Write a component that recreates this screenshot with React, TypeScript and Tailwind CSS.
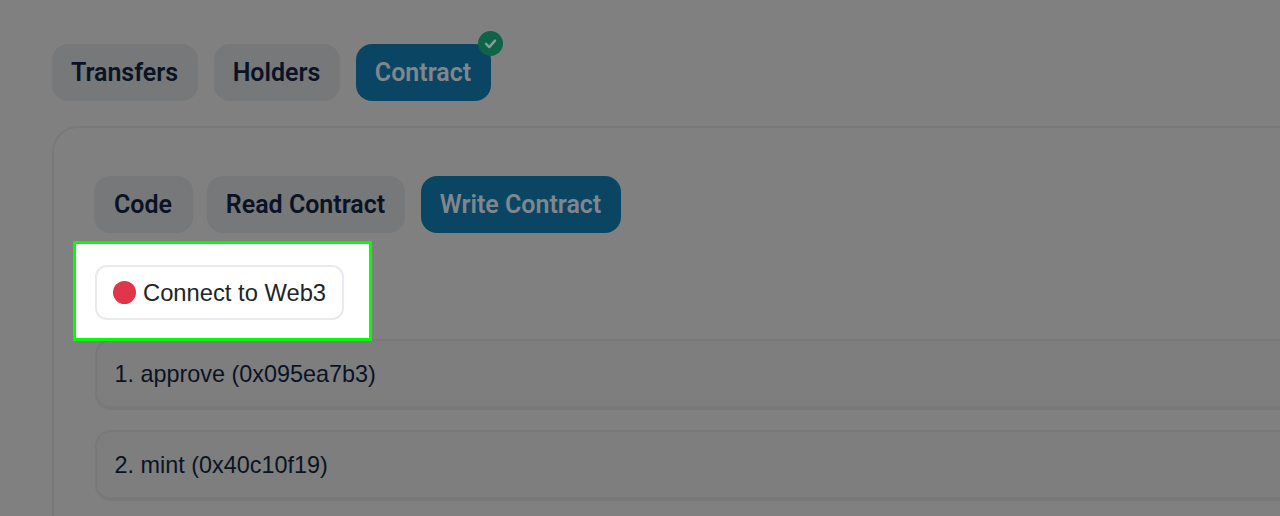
const roboto = "font-['Roboto',sans-serif] font-[560] text-[25px] leading-[57px]";
const sans = "font-['Liberation_Sans',Arial,sans-serif]";

const Tab = ({ label, active, className }: { label: string; active?: boolean; className: string }) => (
  <div
    className={`${roboto} ${className} h-[57px] rounded-2xl pr-px text-center ${
      active ? "bg-[#0a4564] text-[#80878c]" : "bg-[#77787a] text-[#0a1324]"
    }`}
  >
    {label}
  </div>
);

const MethodRow = ({ label }: { label: string }) => (
  <div
    className={`${sans} h-[71px] rounded-2xl border-2 border-b-4 border-[#78797a] bg-[#7e7e7e] pl-[17.5px] text-[23.4px] leading-[66px] text-[#0a1324]`}
  >
    {label}
  </div>
);

export default function App() {
  return (
    <div className="relative h-[516px] w-[1280px] overflow-hidden bg-[#808080]">
      <div className="px-[52px] pt-11">
        <div className="flex gap-4">
          <Tab label="Transfers" className="w-[146px]" />
          <Tab label="Holders" className="w-[126px]" />
          <div className="relative">
            <Tab label="Contract" active className="w-[135px]" />
            <div className="absolute -right-3 -top-[13px] flex h-[25px] w-[25px] items-center justify-center rounded-full bg-[#0d6449]">
              <svg width="13" height="13" viewBox="0 0 16 16" fill="none" stroke="#8a9a94" strokeWidth="3" strokeLinecap="round" strokeLinejoin="round">
                <path d="M2.5 8.5 6.5 12.5 13.5 4.5" />
              </svg>
            </div>
          </div>
        </div>

        <div className="mt-[25px] h-[500px] w-[1400px] rounded-[26px] border-2 border-[#78797a] pl-10 pt-[48px]">
          <div className="flex gap-[14px]">
            <Tab label="Code" className="w-[99px]" />
            <Tab label="Read Contract" className="w-[198px]" />
            <Tab label="Write Contract" active className="ml-0.5 w-[200px]" />
          </div>
          <div className="ml-px mt-[106px] flex flex-col gap-5">
            <MethodRow label="1. approve (0x095ea7b3)" />
            <MethodRow label="2. mint (0x40c10f19)" />
          </div>
        </div>
      </div>

      <div className="absolute left-[73px] top-[241px] flex h-[100px] w-[299px] items-center border-[3px] border-[#00ff00] bg-white pl-[19px] pt-0.5">
        <div className="flex h-[55px] w-[249px] items-center gap-[7px] rounded-xl border-2 border-[#e9e9ef] bg-white pl-4">
          <span className="h-[23px] w-[23px] rounded-full bg-[#e0364a]" />
          <span className={`${sans} pt-0.5 text-[23.75px] text-[#212529]`}>Connect to Web3</span>
        </div>
      </div>
    </div>
  );
}
